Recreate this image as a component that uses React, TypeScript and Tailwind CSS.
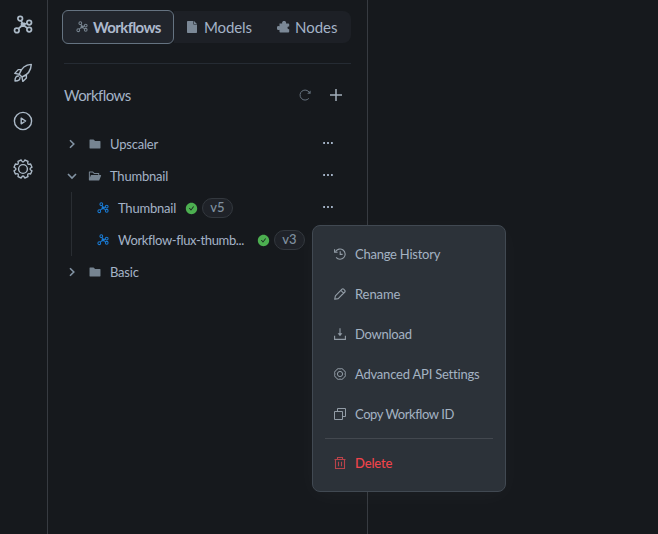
import React from "react";
import { AiFillFolder, AiFillFolderOpen, AiFillCheckCircle } from "react-icons/ai";

type IconProps = { className?: string };

function Flow({ className = "" }: IconProps) {
  return (
    <svg viewBox="0 0 20 20" className={className} fill="none" stroke="currentColor" strokeWidth="1.7">
      <circle cx="7.2" cy="3.6" r="2.3" />
      <circle cx="16.2" cy="7.6" r="2.3" />
      <circle cx="16.2" cy="14.6" r="2.3" />
      <circle cx="3.8" cy="15.4" r="2.3" />
      <path d="M8.2 5.8 9.5 8.5M5.5 13.7 8.5 11M11.5 9.3 14 8.3M11.5 11l2.8 2.2" />
      <rect x="7.8" y="7.6" width="4.4" height="4.4" rx=".7" fill="currentColor" stroke="none" />
    </svg>
  );
}

function Rocket() {
  return (
    <svg viewBox="0 0 20 20" className="size-5" fill="none" stroke="currentColor" strokeWidth="1.4" strokeLinejoin="round" strokeLinecap="round">
      <path d="M6.2 11.2C8 6.2 12 1.8 18.3 1.4 18 7.8 14.2 12 9 14ZM8.6 6.6H5.2L1.8 10.4l4.4.8M9 14l.8 4.4 3.6-3.5v-3.4M5.6 13c-2.4-.1-3.6 1.5-3.6 5 3.6 0 5.2-1.2 5-3.6" />
    </svg>
  );
}

function Play() {
  return (
    <svg viewBox="0 0 20 20" className="size-5" fill="none" stroke="currentColor" strokeWidth="1.4" strokeLinejoin="round">
      <circle cx="10" cy="10" r="8.6" />
      <path d="M8.2 7.2v5.6l4.4-2.8Z" />
    </svg>
  );
}

function Gear() {
  return (
    <svg viewBox="0 0 20 20" className="size-5" fill="none" stroke="currentColor" strokeWidth="1.4" strokeLinejoin="round">
      <path d="M8.2 1Q10 5 11.8 1L15 2.4Q13.6 6.4 17.6 5L19 8.2Q15 10 19 11.8L17.6 15Q13.6 13.6 15 17.6L11.8 19Q10 15 8.2 19L5 17.6Q6.4 13.6 2.4 15L1 11.8Q5 10 1 8.2L2.4 5Q6.4 6.4 5 2.4Z" />
      <circle cx="10" cy="10" r="4.4" />
    </svg>
  );
}

function FileIcon() {
  return (
    <svg viewBox="0 0 10 12" className="h-3 w-2.5" fill="currentColor">
      <path d="M.7 0H6.4v3.6H10v7.7a.7.7 0 0 1-.7.7H.7a.7.7 0 0 1-.7-.7V.7A.7.7 0 0 1 .7 0ZM7 0l3 3H7Z" />
    </svg>
  );
}

function Puzzle() {
  return (
    <svg viewBox="0 0 13 12" className="h-3 w-[13px]" fill="currentColor">
      <path d="M2.5 2.5h2.7a2 2 0 1 1 3.8 0h2.4c.4 0 .8.3.8.8v2.2h-.4a1.2 1.2 0 0 0 0 2.7h.4v2.5c0 .5-.4.8-.8.8H3.3a.8.8 0 0 1-.8-.8V8.8a2 2 0 1 1 0-3.6Z" />
    </svg>
  );
}

function Refresh({ className = "" }: IconProps) {
  return (
    <svg viewBox="0 0 12 12" className={`size-3 ${className}`} fill="none" stroke="currentColor">
      <path d="M9.8 9.4A5 5 0 1 1 10.3 3.4" />
      <path d="M11.6 1.4v3.4H8.2Z" fill="currentColor" stroke="none" />
    </svg>
  );
}

function Chevron({ open = false }: { open?: boolean }) {
  return (
    <svg viewBox="0 0 10 10" className="size-2.5" fill="none" stroke="currentColor" strokeWidth="1.6">
      <path d={open ? "M1 3l4 4 4-4" : "M3 1.2l3.8 3.8L3 8.8"} />
    </svg>
  );
}

function Dots() {
  return (
    <svg viewBox="0 0 10 2" className="mb-0.5 h-0.5 w-2.5" fill="currentColor">
      <path d="M.2 0h1.8v2H.2zM4.1 0h1.8v2H4.1zM8 0h1.8v2H8z" />
    </svg>
  );
}

function History() {
  return (
    <svg viewBox="0 0 12 12" className="size-3 shrink-0" fill="none" stroke="currentColor" strokeWidth="1.1">
      <path d="M1.6 3.6A5.1 5.1 0 1 1 2.1 9.4M.6 1.2v3h3M6.2 3.2v3.2h2.4" />
    </svg>
  );
}

function Pencil() {
  return (
    <svg viewBox="0 0 12 12" className="size-3" fill="none" stroke="currentColor" strokeWidth="1.1" strokeLinejoin="round">
      <path d="M.7 11.3l.7-3.5 6.6-6.6a1.2 1.2 0 0 1 1.7 0l1.1 1.1a1.2 1.2 0 0 1 0 1.7l-6.6 6.6ZM6.8 2.4l2.8 2.8" />
    </svg>
  );
}

function Download() {
  return (
    <svg viewBox="0 0 12 12" className="size-3" fill="none" stroke="currentColor" strokeWidth="1.1">
      <path d="M6 .3V6M.6 7.7v3.7h10.8V7.7" />
      <path d="M3.6 5.2h4.8L6 8.2Z" fill="currentColor" stroke="none" />
    </svg>
  );
}

function RoundGear() {
  return (
    <svg viewBox="0 0 12 12" className="size-3" fill="none" stroke="currentColor">
      <path d="M4.3.6Q6 1.2 7.7.6L8.9 1.1Q9.4 2.6 10.9 3.1L11.4 4.3Q10.8 6 11.4 7.7L10.9 8.9Q9.4 9.4 8.9 10.9L7.7 11.4Q6 10.8 4.3 11.4L3.1 10.9Q2.6 9.4 1.1 8.9L.6 7.7Q1.2 6 .6 4.3L1.1 3.1Q2.6 2.6 3.1 1.1Z" />
      <circle cx="6" cy="6" r="2.6" />
    </svg>
  );
}

function Copy() {
  return (
    <svg viewBox="0 0 12 12" className="size-3" fill="none" stroke="currentColor">
      <path d="M.5 3.5h8v8h-8zM3.5 3.5v-3h8v8h-3" />
    </svg>
  );
}

function Trash() {
  return (
    <svg viewBox="0 0 12 12" className="size-3" fill="none" stroke="currentColor" strokeWidth="1.1">
      <path d="M.5 2.5h11M3.5 2.5v-2h5v2M1.5 2.5v9h9v-9M4.5 4.8v4.4M7.5 4.8v4.4" />
    </svg>
  );
}

function Folder({ name, open = false }: { name: string; open?: boolean }) {
  return (
    <div className="flex h-8 items-center pr-[18px]">
      <span className="ml-[3px] text-[#8293a3]"><Chevron open={open} /></span>
      <span className="ml-[11px] text-[#768491]">{open ? <AiFillFolderOpen size={14} /> : <AiFillFolder size={14} />}</span>
      <span className="ml-2 pt-px text-[13px] tracking-[-0.2px]">{name}</span>
      {name !== "Basic" && <span className="ml-auto"><Dots /></span>}
    </div>
  );
}

function Version({ children }: { children: React.ReactNode }) {
  return (
    <>
      <AiFillCheckCircle size={13} className="shrink-0 text-[#4caf50]" />
      <span className="ml-[4px] flex h-5 w-[31px] shrink-0 items-center justify-center rounded-full border border-[#33383e] bg-[#1f2228] text-[13px] font-medium text-[#7f909f]">{children}</span>
    </>
  );
}

function MenuItem({ icon, label, tracking }: { icon: React.ReactNode; label: string; tracking: string }) {
  return (
    <div className="flex h-10 items-center gap-[9px] pl-[9px] text-[#a4b3c3]">
      <span className="flex w-3 justify-center text-[#929ca6]">{icon}</span>
      <span className={`pt-px text-[13px] whitespace-nowrap ${tracking}`}>{label}</span>
    </div>
  );
}

export default function App() {
  return (
    <div className="relative flex h-[534px] w-[658px] overflow-hidden bg-[#16191d] font-['Lato','Noto_Sans',sans-serif] text-[#a4b3c7]">
      <nav className="flex w-12 shrink-0 flex-col items-center gap-7 border-r border-[#373b41] pt-[15px] pr-px text-[#acbac8]">
        <Flow className="size-5" />
        <Rocket />
        <Play />
        <Gear />
      </nav>
      <aside className="w-80 shrink-0 border-r border-[#373b41] pt-2.5 pr-4 pl-3.5">
        <div className="flex h-[34px] items-center rounded-lg">
          <div className="flex h-[34px] w-28 shrink-0 items-center rounded-md border border-[#657381] bg-[#21252c] pl-[13px]">
            <Flow className="size-3 text-[#788591]" />
            <span className="ml-[5px] text-[15px] font-bold tracking-[-0.6px] text-[#adb9cc]">Workflows</span>
          </div>
          <div className="flex h-8 flex-1 items-center rounded-r-lg bg-[#1d2026] pl-[13px]">
            <span className="text-[#7b8896]"><FileIcon /></span>
            <span className="ml-[7px] w-[73px] text-[15px] tracking-[-0.1px]">Models</span>
            <span className="text-[#7b8896]"><Puzzle /></span>
            <span className="ml-[5px] text-[15px]">Nodes</span>
          </div>
        </div>
        <div className="mt-[19px] ml-0.5 h-px bg-[#252b33]" />
        <header className="mt-[15px] ml-0.5 flex h-8 items-center pr-[9px]">
          <h1 className="pt-px text-[15px] tracking-[-0.55px]">Workflows</h1>
          <Refresh className="ml-auto text-[#65717d]" />
          <svg viewBox="0 0 12 12" className="ml-[19px] size-3 text-[#a3afbb]" fill="none" stroke="currentColor" strokeWidth="1.5"><path d="M6 0v12M0 6h12" /></svg>
        </header>
        <div className="mt-[17px] ml-0.5">
          <Folder name="Upscaler" />
          <Folder name="Thumbnail" open />
          <div className="ml-[7px] border-l border-[#292d32] pl-[25px]">
            <div className="flex h-8 items-center pr-[18px]">
              <Flow className="size-3 text-[#197bd4]" />
              <span className="ml-[9px] w-[67px] pt-px text-[13px] tracking-[-0.2px]">Thumbnail</span>
              <Version>v5</Version>
              <span className="ml-auto"><Dots /></span>
            </div>
            <div className="flex h-8 items-center">
              <Flow className="size-3 text-[#197bd4]" />
              <span className="ml-[9px] w-[139px] pt-px text-[13px] tracking-[-0.35px] whitespace-nowrap">Workflow-flux-thumb...</span>
              <Version>v3</Version>
            </div>
          </div>
          <Folder name="Basic" />
        </div>
      </aside>
      <div className="absolute top-[225px] left-[312px] h-[267px] w-[194px] rounded-lg border border-[#414952] bg-[#2c3239] px-3 pt-2 shadow-[0_4px_24px_rgba(255,255,255,0.03)]">
        <MenuItem icon={<History />} label="Change History" tracking="tracking-[-0.24px]" />
        <MenuItem icon={<Pencil />} label="Rename" tracking="tracking-[-0.1px]" />
        <MenuItem icon={<Download />} label="Download" tracking="tracking-[-0.25px]" />
        <MenuItem icon={<RoundGear />} label="Advanced API Settings" tracking="tracking-[-0.21px]" />
        <MenuItem icon={<Copy />} label="Copy Workflow ID" tracking="tracking-[-0.42px]" />
        <div className="mt-1 h-px bg-[#43484f]" />
        <div className="mt-1 flex h-10 items-center gap-[9px] pl-[9px] text-[#f0444b]">
          <span className="text-[#b7434a]"><Trash /></span>
          <span className="pt-px text-[13px] font-medium tracking-[-0.15px]">Delete</span>
        </div>
      </div>
    </div>
  );
}
